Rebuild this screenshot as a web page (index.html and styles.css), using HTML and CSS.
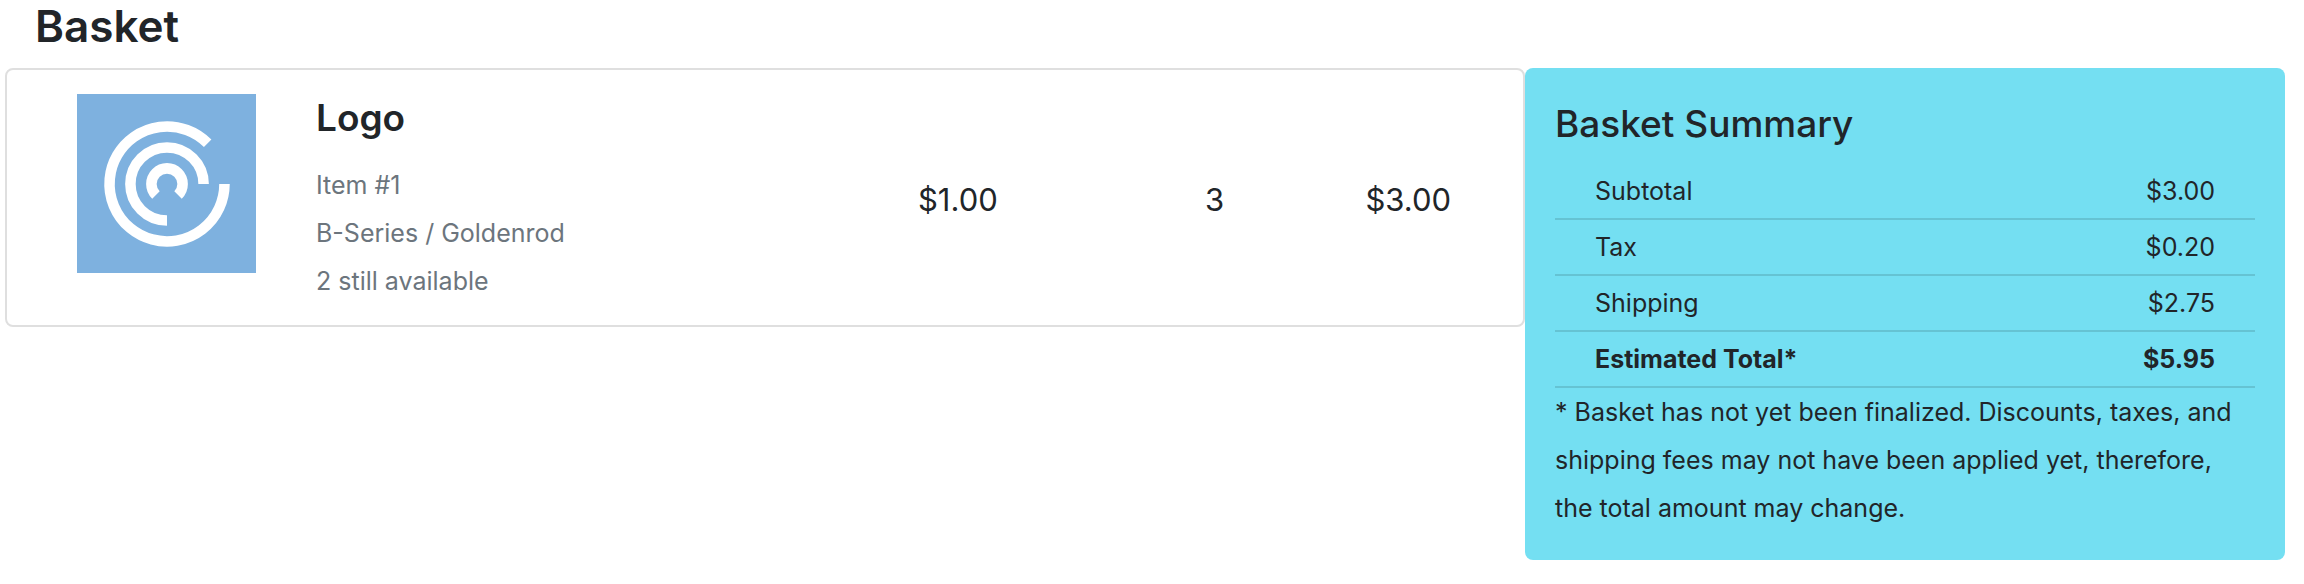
FILE: index.html
```html
<!DOCTYPE html>
<html lang="en">
<head>
    <meta charset="UTF-8">
    <meta name="viewport" content="width=device-width, initial-scale=1.0">
    <title>Basket</title>
    <link rel="stylesheet" href="styles.css">
</head>
<body>
    <h1 class="page-title">Basket</h1>
    <main class="basket">
        <section class="item">
            <svg class="item-image" viewBox="0 0 180 180" role="img" aria-label="Logo">
                <rect width="180" height="180" fill="#7eb1df"/>
                <g fill="none" stroke="#fff" stroke-width="10.6">
                    <path d="M148.3 90.5A57.8 57.8 0 1 1 131.4 49.6"/>
                    <path d="M127.3 90.5A36.8 36.8 0 1 0 90.5 127.3"/>
                    <path d="M79.4 101.6A15.7 15.7 0 1 1 101.6 101.6"/>
                </g>
            </svg>
            <div class="item-info">
                <h2>Logo</h2>
                <p>Item #1</p>
                <p>B-Series / Goldenrod</p>
                <p>2 still available</p>
            </div>
            <div class="item-price">$1.00</div>
            <div class="item-quantity">3</div>
            <div class="item-total">$3.00</div>
        </section>
        <section class="summary">
            <h2>Basket Summary</h2>
            <table>
                <tbody>
                    <tr>
                        <th scope="row">Subtotal</th>
                        <td>$3.00</td>
                    </tr>
                    <tr>
                        <th scope="row">Tax</th>
                        <td>$0.20</td>
                    </tr>
                    <tr>
                        <th scope="row">Shipping</th>
                        <td>$2.75</td>
                    </tr>
                    <tr class="total">
                        <th scope="row">Estimated Total*</th>
                        <td>$5.95</td>
                    </tr>
                </tbody>
            </table>
            <p>* Basket has not yet been finalized. Discounts, taxes, and shipping fees may not have been applied yet, therefore, the total amount may change.</p>
        </section>
    </main>
</body>
</html>
```
FILE: styles.css
```css
*{
    box-sizing: border-box;
}
body{
    margin: 0;
    padding: 0 19px 0 5px;
    background-color: #fff;
    color: #212529;
    font-family: Inter, "Liberation Sans", sans-serif;
    font-size: 25px;
    line-height: 48px;
}
h1,h2,p{
    margin: 0;
}
h1,h2{
    font-weight: 600;
}
h2{
    font-size: 37px;
}
.page-title{
    margin-bottom: 16px;
    padding-left: 30px;
    font-size: 44px;
    line-height: 52px;
}
.basket{
    display: grid;
    grid-template-columns: 2fr 1fr;
    align-items: start;
}
.item{
    display: grid;
    grid-template-columns: 239px 2fr 1fr 1fr 108px;
    align-items: center;
    padding: 24px 72px 20px 70px;
    border: 2px solid #dfdfdf;
    border-radius: 8px;
}
.item-image{
    width: 179px;
    align-self: start;
}
.item-info{
    color: #6c757d;
}
.item-info h2{
    margin-bottom: 19px;
    color: #212529;
}
.item-price,.item-quantity,.item-total{
    font-size: 31px;
    text-align: center;
}
.item-total{
    text-align: right;
}
.summary{
    padding: 32px 30px 28px;
    background-color: #74dff2;
    border-radius: 8px;
}
.summary h2{
    margin-bottom: 16px;
    font-weight: 500;
}
.summary table{
    width: 100%;
    border-collapse: collapse;
}
.summary th,.summary td{
    padding: 3px 40px;
    border-bottom: 2px solid rgba(0, 0, 0, 0.125);
    font-weight: 400;
    text-align: left;
}
.summary td{
    text-align: right;
}
.summary .total th,.summary .total td{
    font-weight: 700;
}
```
